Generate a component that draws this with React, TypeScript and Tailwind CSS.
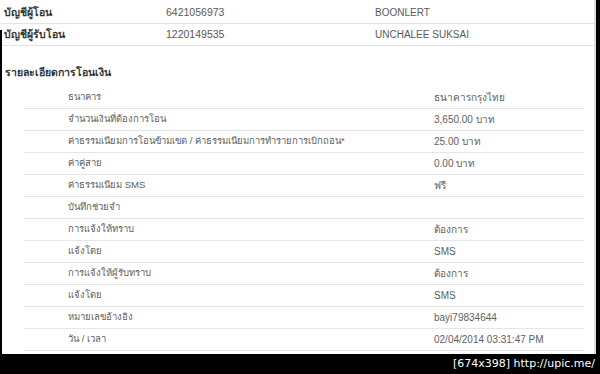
const accounts = [
  { label: "บัญชีผู้โอน", number: "6421056973", name: "BOONLERT" },
  { label: "บัญชีผู้รับโอน", number: "1220149535", name: "UNCHALEE SUKSAI" },
];

const details: { label: string; value: string; star?: boolean }[] = [
  { label: "ธนาคาร", value: "ธนาคารกรุงไทย" },
  { label: "จำนวนเงินที่ต้องการโอน", value: "3,650.00 บาท" },
  { label: "ค่าธรรมเนียมการโอนข้ามเขต / ค่าธรรมเนียมการทำรายการเบิกถอน", value: "25.00 บาท", star: true },
  { label: "ค่าคู่สาย", value: "0.00 บาท" },
  { label: "ค่าธรรมเนียม SMS", value: "ฟรี" },
  { label: "บันทึกช่วยจำ", value: "" },
  { label: "การแจ้งให้ทราบ", value: "ต้องการ" },
  { label: "แจ้งโดย", value: "SMS" },
  { label: "การแจ้งให้ผู้รับทราบ", value: "ต้องการ" },
  { label: "แจ้งโดย", value: "SMS" },
  { label: "หมายเลขอ้างอิง", value: "bayi79834644" },
  { label: "วัน / เวลา", value: "02/04/2014 03:31:47 PM" },
];

export default function App() {
  return (
    <div
      className="w-[600px] h-[374px] bg-black flex flex-col overflow-hidden"
      style={{ fontFamily: '"Liberation Sans", Tahoma, "Noto Sans", sans-serif' }}
    >
      <div className="relative w-[596px] h-[354px] bg-white border-r-2 border-[#dcdcdc] pt-[2px]">
        {/* left edge of the crop */}
        <div className="absolute left-0 top-[30px] w-[2px] h-[324px] bg-black" />

        {accounts.map((a) => (
          <div
            key={a.number}
            className="grid grid-cols-[166px_209px_1fr] items-center h-[22px] border-b border-[#e3e3e3] text-[10.5px]"
          >
            <span className="pl-[4px] font-bold text-[#333]">{a.label}</span>
            <span className="text-[#5a5a5a]">{a.number}</span>
            <span className="text-[#5a5a5a] text-[10px]">{a.name}</span>
          </div>
        ))}

        <h3 className="mt-[18px] pl-[5px] h-[16px] leading-[16px] text-[10.5px] font-bold text-[#333]">
          รายละเอียดการโอนเงิน
        </h3>

        <div className="mt-[7px] ml-[24px] w-[560px]">
          {details.map((d, i) => (
            <div
              key={i}
              className="grid grid-cols-[410px_1fr] items-center h-[22px] border-b border-[#e6e6e6] text-[9.5px] text-[#606060]"
            >
              <span className="pl-[44px]">
                {d.label}
                {d.star && <span className="text-[#e03030]">*</span>}
              </span>
              <span className="text-[10px]">{d.value}</span>
            </div>
          ))}
        </div>
      </div>

      <div className="flex-1 flex items-center justify-end pr-[5px]">
        <span
          className="text-white text-[11px]"
          style={{ fontFamily: '"DejaVu Sans", sans-serif' }}
        >
          [674x398] http://upic.me/
        </span>
      </div>
    </div>
  );
}
